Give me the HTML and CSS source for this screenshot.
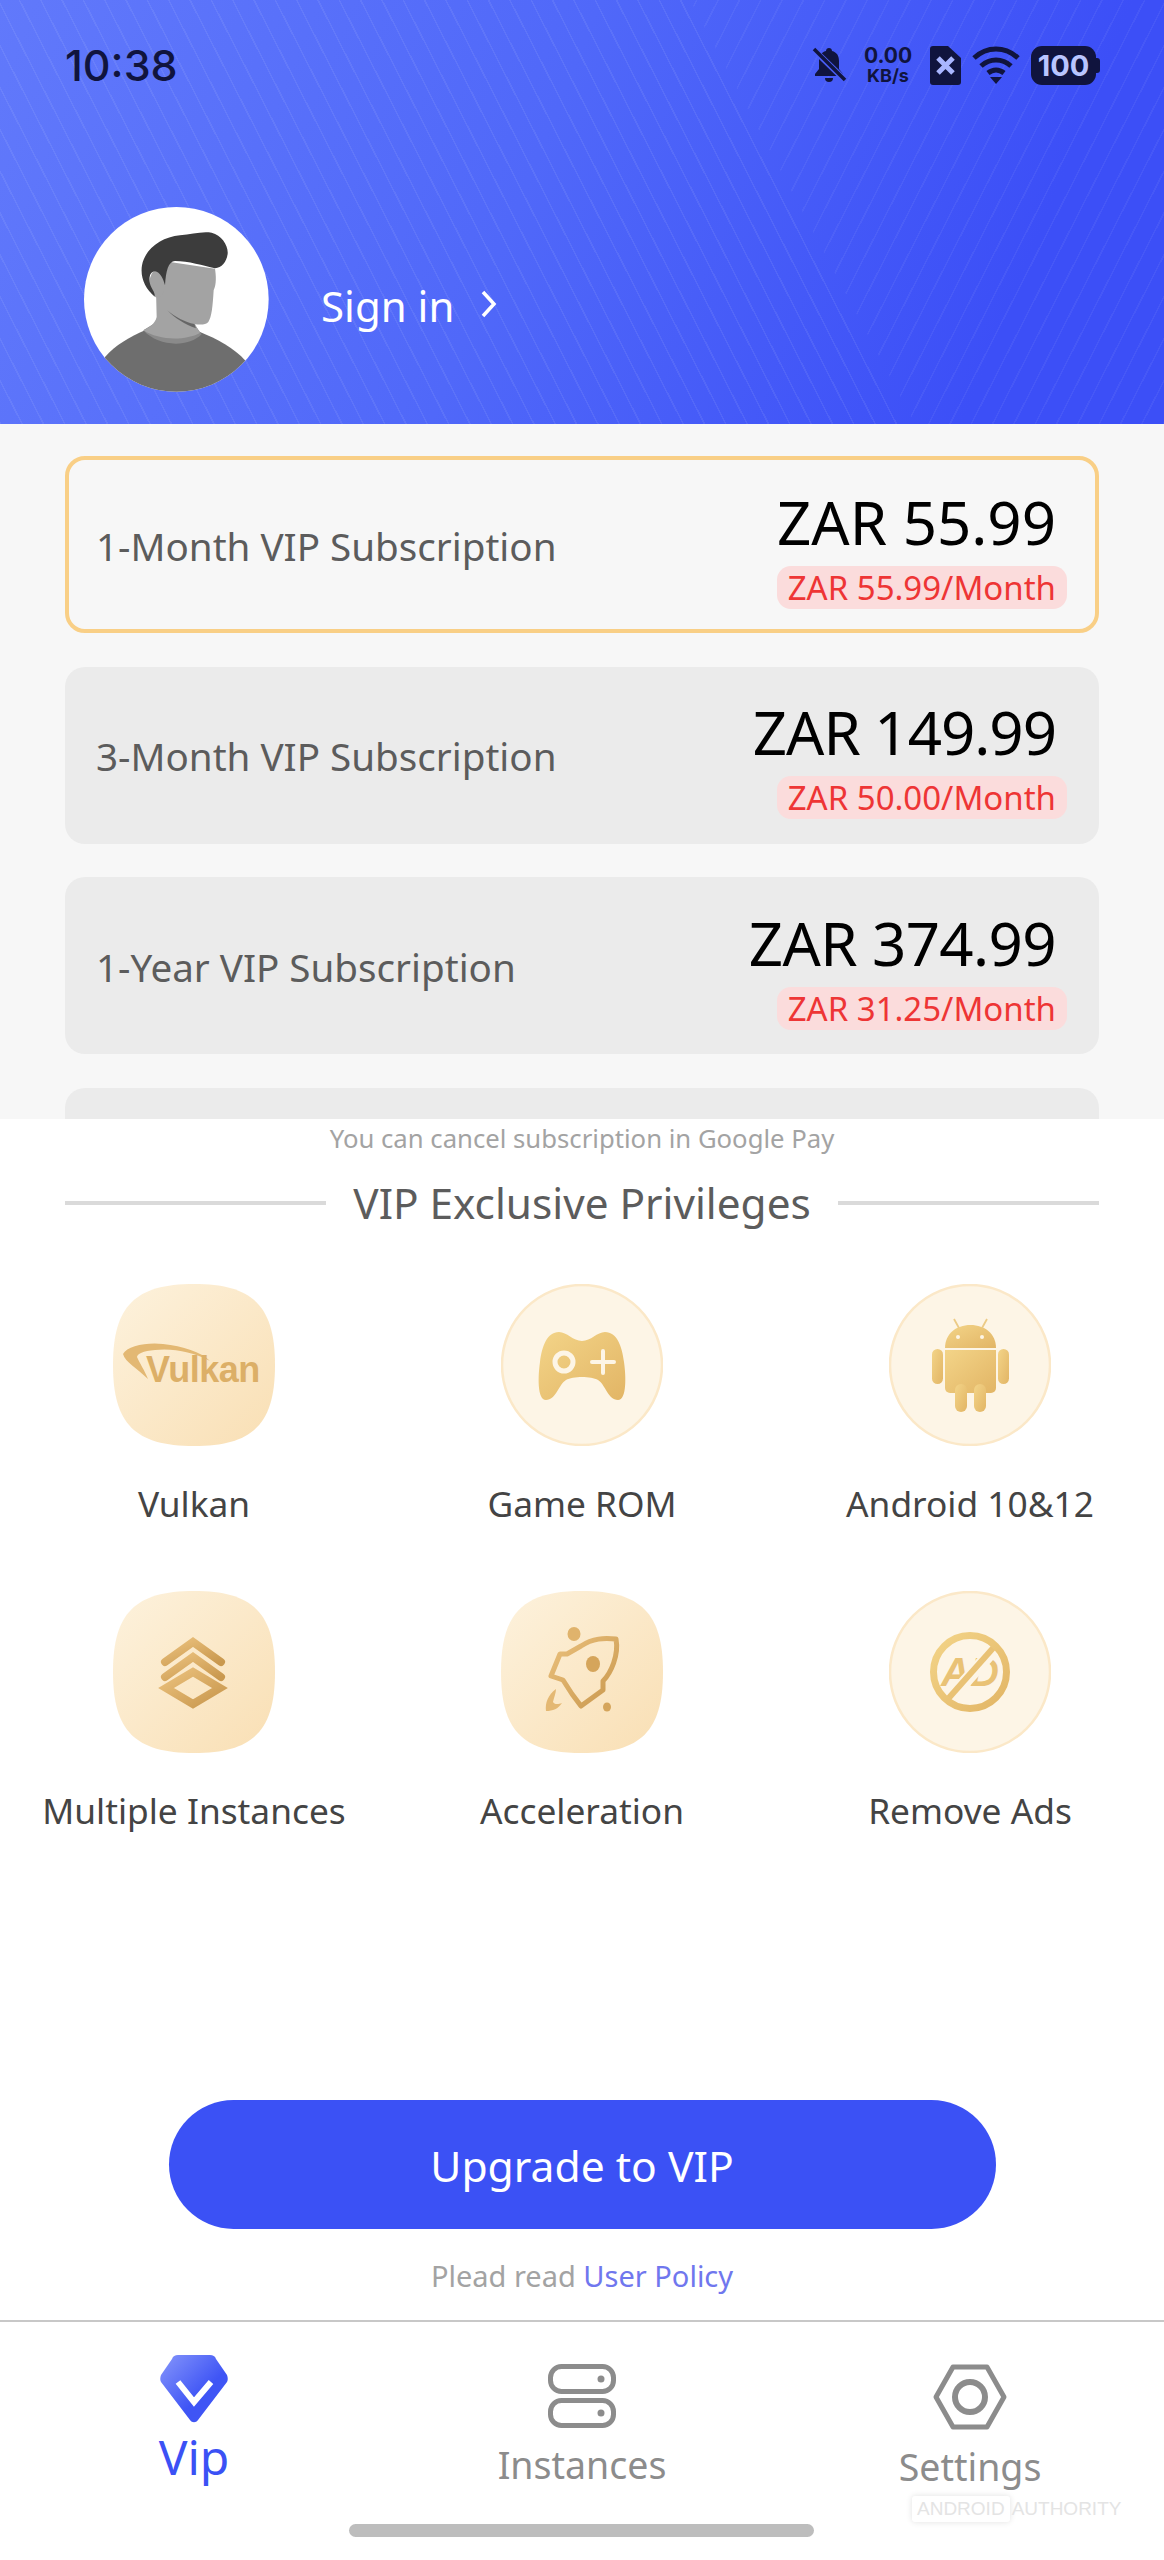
FILE: index.html
```html
<!DOCTYPE html>
<html lang="en">
<head>
    <meta charset="UTF-8">
    <meta name="viewport" content="width=device-width, initial-scale=1.0">
    <title>VIP</title>
    <link rel="stylesheet" href="styles.css">
</head>
<body>
    <svg class="defs" width="0" height="0">
        <defs>
            <linearGradient id="gold" x1="0" y1="0" x2="1" y2="1">
                <stop offset="0" stop-color="#f3d488"/>
                <stop offset="1" stop-color="#e2b565"/>
            </linearGradient>
            <linearGradient id="bronze" x1="0" y1="0" x2="1" y2="1">
                <stop offset="0" stop-color="#eac07c"/>
                <stop offset="1" stop-color="#c9984e"/>
            </linearGradient>
            <linearGradient id="gem" x1="0" y1="0" x2="1" y2="1">
                <stop offset="0" stop-color="#8696fb"/>
                <stop offset="0.6" stop-color="#3f55f5"/>
            </linearGradient>
            <linearGradient id="tile-a" x1="0" y1="0" x2="1" y2="1">
                <stop offset="0" stop-color="#fdf2dd"/>
                <stop offset="1" stop-color="#f9dfb4"/>
            </linearGradient>
            <clipPath id="avatar-clip"><circle cx="349" cy="327" r="277"/></clipPath>
        </defs>
    </svg>

    <header class="hero">
        <div class="status-bar">
            <span class="clock">10:38</span>
            <div class="status-icons">
                <svg class="ic-bell" viewBox="0 0 35 36">
                    <path d="M17 1c-1.600 0-3 1.300-3 3-5 1.300-7 5-7 10v8l-4 5v2h28v-2l-4-5v-8c0-5-2-8.700-7-10 0-1.700-1.400-3-3-3z" fill="#10143e"/>
                    <path d="M13 31h8a4 4 0 0 1-8 0z" fill="#10143e"/>
                    <path d="M2 3l31 30" stroke="#4a5ff8" stroke-width="6"/>
                    <path d="M2 2l31 31" stroke="#10143e" stroke-width="3.500"/>
                </svg>
                <div class="speed"><span>0.00</span><span>KB/s</span></div>
                <svg class="ic-sim" viewBox="0 0 31 39">
                    <path d="M3 0h15l13 12v24a3 3 0 0 1-3 3H3a3 3 0 0 1-3-3V3a3 3 0 0 1 3-3z" fill="#10143e"/>
                    <path d="M8 12l15 15M23 12L8 27" stroke="#a9b6ff" stroke-width="5"/>
                </svg>
                <svg class="ic-wifi" viewBox="0 0 48 38">
                    <path d="M2 12C15 0 33 0 46 12" stroke="#10143e" stroke-width="5" fill="none"/>
                    <path d="M9 20c9-8 21-8 30 0" stroke="#10143e" stroke-width="5" fill="none"/>
                    <path d="M16 27c5-4 11-4 16 0" stroke="#10143e" stroke-width="5" fill="none"/>
                    <path d="M18 31h12l-6 7z" fill="#10143e"/>
                </svg>
                <div class="battery"><span>100</span></div>
            </div>
        </div>
        <div class="account">
            <svg class="avatar" viewBox="72 50 555 555">
                <circle cx="349" cy="327" r="277" fill="#fff"/>
                <g clip-path="url(#avatar-clip)">
                    <path d="M135 500C165 465 210 440 255 420L420 425C470 445 525 475 555 510V620H135z" fill="#6e6e6e"/>
                    <path d="M250 420C295 470 385 472 425 432L405 405L290 395z" fill="#8a8a8a"/>
                    <path d="M288 300L290 380C285 400 268 412 250 420C295 450 375 452 420 428L405 402C420 403 437 405 445 395C455 380 458 350 461 300C470 280 468 255 465 235L330 215z" fill="#a3a3a3"/>
                    <ellipse cx="292" cy="280" rx="24" ry="42" fill="#a3a3a3"/>
                    <path d="M322 360C345 385 375 402 408 414L403 401C375 396 345 380 322 360z" fill="#666"/>
                    <path d="M284 318C255 295 240 260 246 225C255 175 305 140 360 135C395 132 425 122 455 127C485 135 505 165 503 190C500 215 485 232 465 234C430 226 385 212 345 212C325 214 318 240 315 285C310 265 300 245 285 243C270 243 266 262 270 280C274 295 286 305 284 318z" fill="#3c3c3c"/>
                </g>
            </svg>
            <span class="sign-in">Sign in</span>
            <svg class="chevron" viewBox="0 0 16 28"><path d="M2 2l11 12L2 26" stroke="#fff" stroke-width="3.500" fill="none"/></svg>
        </div>
    </header>

    <section class="plans">
        <div class="plan plan-active">
            <span class="plan-name">1-Month VIP Subscription</span>
            <div class="plan-right">
                <span class="price">ZAR 55.99</span>
                <span class="per-month">ZAR 55.99/Month</span>
            </div>
        </div>
        <div class="plan">
            <span class="plan-name">3-Month VIP Subscription</span>
            <div class="plan-right">
                <span class="price price-tight">ZAR 149.99</span>
                <span class="per-month">ZAR 50.00/Month</span>
            </div>
        </div>
        <div class="plan">
            <span class="plan-name">1-Year VIP Subscription</span>
            <div class="plan-right">
                <span class="price price-snug">ZAR 374.99</span>
                <span class="per-month">ZAR 31.25/Month</span>
            </div>
        </div>
        <div class="plan"></div>
    </section>

    <section class="privileges">
        <p class="cancel-note">You can cancel subscription in Google Pay</p>
        <div class="section-title"><span>VIP Exclusive Privileges</span></div>

        <div class="perk-grid">
            <div class="perk">
                <svg class="tile" viewBox="0 0 162 162">
                    <path d="M81 0C140 0 162 22 162 81S140 162 81 162S0 140 0 81S22 0 81 0z" fill="url(#tile-a)"/>
                    <path d="M35 95C25 85 12 78 10 70C14 62 34 58 50 60C70 62 88 68 97 77C80 68 60 64 42 66C30 67 24 70 24 73C26 78 32 87 35 95z" fill="#e3b873"/>
                    <text x="33" y="98" class="vulkan-word">Vulkan</text>
                </svg>
                <span>Vulkan</span>
            </div>
            <div class="perk">
                <svg class="tile" viewBox="0 0 162 162">
                    <circle cx="81" cy="81" r="80" fill="#fdf5e6" stroke="#fbe8c8" stroke-width="2.500"/>
                    <path d="M58 48C66 48 72 57 81 57C90 57 96 48 104 48C116 48 121 62 123 78C125 92 126 116 117 116C107 116 104 100 97 96C90 92 72 92 65 96C58 100 55 116 45 116C36 116 37 92 39 78C41 62 46 48 58 48z" fill="url(#gold)"/>
                    <circle cx="63" cy="78" r="9" fill="none" stroke="#fdf5e6" stroke-width="5"/>
                    <path d="M91 78h22M102 67v22" stroke="#fdf5e6" stroke-width="4" stroke-linecap="round"/>
                </svg>
                <span>Game ROM</span>
            </div>
            <div class="perk">
                <svg class="tile" viewBox="0 0 162 162">
                    <circle cx="81" cy="81" r="80" fill="#fdf5e6" stroke="#fbe8c8" stroke-width="2.500"/>
                    <g fill="url(#gold)">
                        <path d="M56 64C56 50 67 41 81.500 41S107 50 107 64z"/>
                        <path d="M56 66h51v38a5 5 0 0 1-5 5H61a5 5 0 0 1-5-5z"/>
                        <rect x="43" y="65" width="11" height="35" rx="5.500"/>
                        <rect x="109" y="65" width="11" height="35" rx="5.500"/>
                        <rect x="66" y="100" width="12" height="28" rx="6"/>
                        <rect x="85" y="100" width="12" height="28" rx="6"/>
                    </g>
                    <path d="M65 35l5 9M98 35l-5 9" stroke="#eccb86" stroke-width="1.800"/>
                    <circle cx="69" cy="53" r="2" fill="#fdf5e6"/>
                    <circle cx="93" cy="53" r="2" fill="#fdf5e6"/>
                </svg>
                <span>Android 10&amp;12</span>
            </div>
            <div class="perk">
                <svg class="tile" viewBox="0 0 162 162">
                    <path d="M81 0C140 0 162 22 162 81S140 162 81 162S0 140 0 81S22 0 81 0z" fill="url(#tile-a)"/>
                    <g fill="none" stroke="url(#bronze)" stroke-width="8">
                        <path d="M52 71L80 51L108 71" stroke-linecap="round"/>
                        <path d="M52 86L80 66L108 86" stroke-linecap="round"/>
                        <path d="M80 81L107 97L80 113L53 97z"/>
                    </g>
                </svg>
                <span>Multiple Instances</span>
            </div>
            <div class="perk">
                <svg class="tile" viewBox="0 0 162 162">
                    <path d="M81 0C140 0 162 22 162 81S140 162 81 162S0 140 0 81S22 0 81 0z" fill="url(#tile-a)"/>
                    <path d="M115 48C103 47 92 47 80 55L66 63H59L50 85L62 89L71 103L80 115L102 99V90C110 82 118 64 115 48z" fill="none" stroke="url(#bronze)" stroke-width="5" stroke-linejoin="round"/>
                    <ellipse cx="92" cy="73" rx="7" ry="8" fill="#d5a55b"/>
                    <ellipse cx="73" cy="43" rx="6.500" ry="7" fill="#e0b36c"/>
                    <ellipse cx="106" cy="116" rx="4" ry="4.500" fill="#d5a55b"/>
                    <path d="M55 98C47 104 44 112 45 120C52 120 57 118 61 112C56 114 53 113 52 111C53 106 55 102 55 98z" fill="#e4b873"/>
                </svg>
                <span>Acceleration</span>
            </div>
            <div class="perk">
                <svg class="tile" viewBox="0 0 162 162">
                    <circle cx="81" cy="81" r="80" fill="#fdf5e6" stroke="#fbe8c8" stroke-width="2.500"/>
                    <text x="81" y="95" class="ad-word">AD</text>
                    <path d="M107 56L57 112" stroke="#fdf5e6" stroke-width="13"/>
                    <path d="M105 56L58 109" stroke="#e9c275" stroke-width="6"/>
                    <circle cx="81" cy="81" r="36.500" fill="none" stroke="url(#gold)" stroke-width="7"/>
                </svg>
                <span>Remove Ads</span>
            </div>
        </div>

        <button class="upgrade-btn" type="button">Upgrade to VIP</button>
        <p class="policy">Plead read <a href="#">User Policy</a></p>
    </section>

    <nav class="tabbar">
        <div class="tabs">
            <div class="tab tab-active">
                <svg class="tab-gem" viewBox="0 0 68 68">
                    <path d="M18 0H50C53 0 55 1 56 4L67 20C68 23 68 25 67 27L38 65C36 68 32 68 30 65L1 27C0 25 0 23 1 20L12 4C13 1 15 0 18 0z" fill="url(#gem)"/>
                    <path d="M18 27L34 47L51 27" fill="none" stroke="#fff" stroke-width="6"/>
                </svg>
                <span>Vip</span>
            </div>
            <div class="tab">
                <svg class="tab-icon" viewBox="0 0 68 64">
                    <rect x="2.500" y="2.500" width="63" height="25" rx="11" fill="none" stroke="#8c8c8c" stroke-width="5"/>
                    <rect x="2.500" y="36.500" width="63" height="25" rx="11" fill="none" stroke="#8c8c8c" stroke-width="5"/>
                    <circle cx="53" cy="15" r="3.500" fill="#8c8c8c"/>
                    <circle cx="53" cy="49" r="3.500" fill="#8c8c8c"/>
                </svg>
                <span>Instances</span>
            </div>
            <div class="tab">
                <svg class="tab-icon tab-hex" viewBox="0 0 74 66">
                    <path d="M20 3H54L71 33L54 63H20L3 33z" fill="none" stroke="#8c8c8c" stroke-width="5" stroke-linejoin="round"/>
                    <circle cx="37" cy="33" r="15" fill="none" stroke="#8c8c8c" stroke-width="6"/>
                </svg>
                <span>Settings</span>
            </div>
        </div>
        <div class="home-bar"></div>
        <div class="watermark"><span class="wm-box">ANDROID</span><span>AUTHORITY</span></div>
    </nav>
</body>
</html>
```

FILE: styles.css
```css
* {
    box-sizing: border-box;
}
body {
    margin: 0;
    width: 1164px;
    height: 2560px;
    display: flex;
    flex-direction: column;
    overflow: hidden;
    background: #fff;
    font-family: "Noto Sans", sans-serif;
}
.defs {
    position: absolute;
}

/* header */
.hero {
    position: relative;
    height: 424px;
    flex-shrink: 0;
    background: linear-gradient(112deg, #6179fb 0%, #5068f9 45%, #3c4ff7 85%);
    overflow: hidden;
}
.hero::before, .hero::after {
    content: "";
    position: absolute;
    inset: 0;
}
.hero::before {
    background: repeating-linear-gradient(63deg, rgba(255, 255, 255, 0.07) 0, rgba(255, 255, 255, 0.07) 1.5px, transparent 1.5px, transparent 19px);
    clip-path: polygon(0 0, 690px 0, 915px 424px, 0 424px);
}
.hero::after {
    background: repeating-linear-gradient(297deg, rgba(255, 255, 255, 0.05) 0, rgba(255, 255, 255, 0.05) 1.5px, transparent 1.5px, transparent 19px);
    clip-path: polygon(690px 0, 1164px 0, 1164px 424px, 915px 424px);
}
.status-bar {
    position: relative;
    z-index: 1;
    display: flex;
    justify-content: space-between;
    align-items: center;
    height: 40px;
    margin-top: 45px;
    padding: 0 64px 0 65px;
}
.clock {
    font-family: "Inter", sans-serif;
    font-size: 43px;
    font-weight: 500;
    color: #10143e;
}
.status-icons {
    display: flex;
    align-items: center;
}
.ic-bell {
    width: 35px;
    height: 36px;
    margin-right: 17px;
}
.speed {
    display: flex;
    flex-direction: column;
    align-items: center;
    width: 48px;
    margin-right: 18px;
    font-family: "Inter", sans-serif;
    font-weight: 700;
    color: #10143e;
}
.speed span:first-child {
    font-size: 21px;
    line-height: 21px;
}
.speed span:last-child {
    font-size: 18px;
    line-height: 19px;
}
.ic-sim {
    width: 31px;
    height: 39px;
    margin-right: 11px;
}
.ic-wifi {
    width: 48px;
    height: 38px;
    margin-right: 11px;
}
.battery {
    position: relative;
    width: 65px;
    height: 39px;
    margin-right: 4px;
    background: #10143e;
    border-radius: 11px;
    display: flex;
    align-items: center;
    justify-content: center;
    color: #b9c5ff;
    font-family: "Inter", sans-serif;
    font-size: 29px;
    font-weight: 700;
}
.battery::after {
    content: "";
    position: absolute;
    right: -4px;
    top: 12px;
    width: 4px;
    height: 15px;
    background: #10143e;
    border-radius: 0 3px 3px 0;
}
.account {
    position: relative;
    z-index: 1;
    display: flex;
    align-items: center;
    margin-top: 122px;
    padding-left: 84px;
}
.avatar {
    width: 185px;
    height: 185px;
}
.sign-in {
    margin-left: 52px;
    margin-top: 12px;
    font-size: 42px;
    color: #fff;
}
.chevron {
    width: 16px;
    height: 28px;
    margin-left: 27px;
    margin-top: 8px;
}

/* plans */
.plans {
    height: 695px;
    flex-shrink: 0;
    overflow: hidden;
    background: #f7f7f7;
    padding: 32px 65px 0 65px;
    display: flex;
    flex-direction: column;
    gap: 33.5px;
}
.plan {
    height: 177px;
    flex-shrink: 0;
    display: flex;
    justify-content: space-between;
    align-items: center;
    padding: 0 32px 0 31px;
    background: #ebebeb;
    border-radius: 20px;
}
.plan-active {
    background: #f7f7f7;
    border: 4px solid #f9cf86;
    padding: 0 28px 0 27px;
}
.plan-name {
    font-size: 38.6px;
    color: #5c5c5c;
    margin-top: 2px;
}
.plan-right {
    display: flex;
    flex-direction: column;
    align-items: flex-end;
    gap: 3px;
}
.price {
    font-size: 60px;
    line-height: 82px;
    color: #000;
    margin-right: 11px;
}
.price-tight {
    letter-spacing: -1px;
}
.price-snug {
    letter-spacing: -0.6px;
}
.per-month {
    height: 43px;
    line-height: 43px;
    padding: 0 11px;
    font-size: 33px;
    color: #ee3535;
    background: #fbdcdc;
    border-radius: 14px;
}

/* privileges */
.privileges {
    flex: 1;
    display: flex;
    flex-direction: column;
    align-items: center;
    background: #fff;
}
.cancel-note {
    margin: 0;
    height: 40px;
    line-height: 40px;
    font-size: 25.7px;
    color: #a3a3a3;
}
.section-title {
    width: 1034px;
    margin-top: 23px;
    display: flex;
    align-items: center;
    gap: 27px;
    height: 40px;
    font-size: 42.3px;
    color: #5c5c5c;
}
.section-title::before, .section-title::after {
    content: "";
    flex: 1;
    height: 4px;
    margin-top: 2px;
    background: #dadada;
}
.perk-grid {
    width: 1164px;
    margin-top: 62px;
    display: grid;
    grid-template-columns: repeat(3, 1fr);
    grid-auto-rows: 307px;
    justify-items: center;
}
.perk {
    display: flex;
    flex-direction: column;
    align-items: center;
    font-size: 35.3px;
    color: #444;
    white-space: nowrap;
}
.perk span {
    margin-top: 32px;
    line-height: 50px;
}
.tile {
    width: 162px;
    height: 162px;
}
.vulkan-word {
    font-family: "Liberation Sans", sans-serif;
    font-size: 36px;
    font-weight: 700;
    fill: #dcaf67;
    letter-spacing: -0.5px;
}
.ad-word {
    font-family: "Liberation Sans", sans-serif;
    font-size: 40px;
    font-weight: 700;
    font-style: italic;
    text-anchor: middle;
    fill: #e9c275;
}
.upgrade-btn {
    margin-top: 202px;
    width: 827px;
    height: 129px;
    border: none;
    border-radius: 65px;
    background: #3b51f5;
    color: #fff;
    font-family: inherit;
    font-size: 42.6px;
}
.policy {
    margin: 25px 0 0;
    line-height: 44px;
    font-size: 29px;
    color: #a3a3a3;
}
.policy a {
    color: #7077ee;
    text-decoration: none;
}

/* bottom nav */
.tabbar {
    position: relative;
    height: 240px;
    flex-shrink: 0;
    border-top: 2px solid #c8c8c8;
    background: #fff;
}
.tabs {
    display: grid;
    grid-template-columns: repeat(3, 1fr);
    height: 202px;
}
.tab {
    display: flex;
    flex-direction: column;
    align-items: center;
    padding-top: 42px;
    font-size: 37.5px;
    color: #8c8c8c;
}
.tab span {
    margin-top: 11px;
    line-height: 52px;
}
.tab-active {
    padding-top: 33px;
    font-size: 48px;
    color: #3b51f5;
}
.tab-active span {
    margin-top: 8px;
}
.tab-gem {
    width: 68px;
    height: 68px;
}
.tab-icon {
    width: 68px;
    height: 64px;
}
.tab-hex {
    width: 74px;
    height: 66px;
}
.home-bar {
    width: 465px;
    height: 13px;
    margin-left: 349px;
    background: #bdbdbd;
    border-radius: 7px;
}
.watermark {
    position: absolute;
    left: 912px;
    top: 174px;
    display: flex;
    gap: 2px;
    align-items: center;
    font-family: "Liberation Sans", sans-serif;
    font-size: 19px;
    color: #e4e4e4;
}
.wm-box {
    padding: 2px 5px;
    background: #fff;
    box-shadow: 0 0 6px rgba(0, 0, 0, 0.12);
    border-radius: 3px;
}
```
